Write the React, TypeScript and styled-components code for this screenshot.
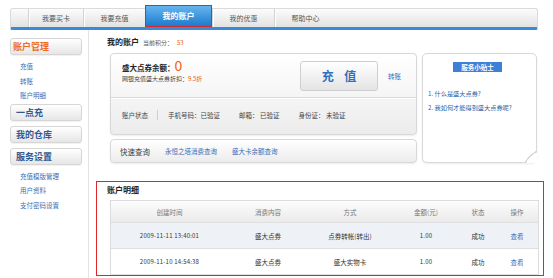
import React from 'react';
import styled, { createGlobalStyle } from 'styled-components';

const Global = createGlobalStyle`
  html, body { margin: 0; padding: 0; background: #fff; }
  body {
    width: 553px; height: 278px; overflow: hidden;
    font-family: "Noto Sans CJK SC", "Liberation Sans", sans-serif;
    color: #333;
  }
  * { box-sizing: border-box; }
`;

const ORANGE = '#f2600c';
const LINK = '#3a6cb4';

const Page = styled.div`
  width: 553px;
`;

const NavBar = styled.nav`
  display: flex;
  margin: 8px 0 0 10px;
  width: 528px;
  height: 22px;
  padding-left: 17px;
  background: linear-gradient(#fcfcfc, #e2e2e2);
  border: 1px solid #dadada;
  border-bottom: 3px solid #3a8ad6;
  border-radius: 3px 3px 2px 2px;
`;

const Tab = styled.div<{ $w: number; $active?: boolean }>`
  width: ${p => p.$w}px;
  flex: none;
  text-align: center;
  font-size: ${p => (p.$active ? 8 : 7)}px;
  font-weight: ${p => (p.$active ? 700 : 400)};
  color: ${p => (p.$active ? '#fff' : '#555')};
  height: ${p => (p.$active ? 22 : 18)}px;
  line-height: ${p => (p.$active ? 20 : 18)}px;
  margin-top: ${p => (p.$active ? -4 : 0)}px;
  border-left: 1px solid ${p => (p.$active ? '#d42a2a' : '#d2d2d2')};
  box-shadow: ${p => (p.$active ? 'none' : 'inset 1px 0 #fff')};
  ${p =>
    p.$active &&
    `
    background: linear-gradient(#66b4ee, #1d7bcd);
    border: 1px solid #d42a2a;
  `}
`;

const Body = styled.div`
  display: flex;
`;

const Sidebar = styled.aside`
  width: 89px;
  flex: none;
  min-height: 248px;
  padding: 8px 6px 0 10px;
  border-right: 1px solid #e3e3e3;
`;

const SideHead = styled.div<{ $accent?: boolean }>`
  height: 17px;
  line-height: 15px;
  padding-left: ${p => (p.$accent ? 2 : 5)}px;
  font-size: 9px;
  font-weight: 700;
  color: ${p => (p.$accent ? '#ee6a1e' : '#2f5b94')};
  border: 1px solid #d6d6d6;
  border-radius: 3px;
  background: linear-gradient(#ffffff, #e6e6e6);
  box-shadow: 0 1px 1px rgba(0, 0, 0, 0.06);
  & + & {
    margin-top: 5px;
  }
`;

const SideList = styled.ul`
  list-style: none;
  margin: 0;
  padding: 4px 0 1px 10px;
`;

const SideItem = styled.li`
  font-size: 6.5px;
  line-height: 14.5px;
  color: ${LINK};
`;

const Main = styled.main`
  flex: 1;
  padding-left: 7px;
`;

const TitleRow = styled.div`
  display: flex;
  align-items: baseline;
  gap: 4px;
  margin-top: 6px;
  height: 12px;
  padding-left: 11px;
`;

const Title = styled.span`
  font-size: 8px;
  font-weight: 700;
  color: #222;
`;

const Small = styled.span<{ $color?: string }>`
  font-size: 6px;
  color: ${p => p.$color || '#555'};
`;

const TopArea = styled.div`
  display: flex;
  gap: 5px;
  margin-top: 5px;
  padding-left: 14px;
`;

const LeftCol = styled.div`
  width: 307px;
  display: flex;
  flex-direction: column;
  gap: 4px;
`;

const Panel = styled.div<{ $h: number }>`
  height: ${p => p.$h}px;
  border: 1px solid #d8d8d8;
  border-radius: 4px;
  background: linear-gradient(#ffffff, #ececec);
  box-shadow: 0 1px 2px rgba(0, 0, 0, 0.08);
`;

const BalanceTop = styled.div`
  display: flex;
  align-items: center;
  height: 44px;
  padding: 0 15px 0 11px;
  border-bottom: 1px solid #d9d9d9;
  box-shadow: 0 1px #fff;
`;

const BalanceText = styled.div`
  flex: 1;
  align-self: flex-start;
  padding-top: 4px;
`;

const BalanceLine = styled.div`
  display: flex;
  align-items: baseline;
  font-size: 7.5px;
  font-weight: 700;
  color: #222;
  height: 14px;
`;

const BigNum = styled.span`
  font-size: 14px;
  line-height: 14px;
  font-weight: 400;
  color: ${ORANGE};
`;

const Discount = styled.div`
  margin-top: 2px;
  font-size: 6px;
  line-height: 10px;
  color: #444;
`;

const ChargeButton = styled.div`
  width: 78px;
  height: 30px;
  margin-right: 10px;
  display: flex;
  align-items: center;
  justify-content: center;
  border: 1px solid #cfcfcf;
  border-radius: 3px;
  background: linear-gradient(#ffffff, #e4e4e4);
  font-size: 12px;
  font-weight: 700;
  letter-spacing: 4px;
  text-indent: 4px;
  color: #2f6fbf;
  white-space: pre;
`;

const Link = styled.span<{ $size?: number }>`
  font-size: ${p => p.$size || 6.5}px;
  color: ${LINK};
`;

const StatusRow = styled.div`
  display: flex;
  align-items: center;
  height: 34px;
  padding-left: 11px;
  font-size: 6.5px;
  color: #444;
`;

const Sep = styled.span<{ $l: number; $r: number }>`
  width: 1px;
  height: 10px;
  background: #cfcfcf;
  margin: 0 ${p => p.$r}px 0 ${p => p.$l}px;
`;

const StatusItem = styled.span`
  margin-right: 19px;
`;

const QuickRow = styled.div`
  display: flex;
  align-items: center;
  height: 100%;
  padding-left: 9px;
  gap: 15px;
`;

const QuickLabel = styled.span`
  font-size: 7.5px;
  color: #444;
`;

const Tips = styled.div`
  position: relative;
  width: 115px;
  height: 110px;
  display: flex;
  flex-direction: column;
  align-items: center;
  padding-top: 8px;
  border: 1px solid #d8d8d8;
  border-radius: 5px;
  background: #fff;
  box-shadow: 0 1px 2px rgba(0, 0, 0, 0.08);
`;

const TipsTitle = styled.div`
  height: 10px;
  line-height: 10px;
  padding: 0 8px;
  margin-left: -4px;
  background: #3d80d8;
  color: #fff;
  font-size: 6.5px;
  font-weight: 700;
`;

const TipsList = styled.ul`
  list-style: none;
  align-self: stretch;
  margin: 15px 0 0;
  padding-left: 5px;
`;

const TipsItem = styled.li`
  font-size: 6.2px;
  line-height: 14px;
  color: #2e5fa6;
`;

const Fold = styled.svg`
  position: absolute;
  right: -1px;
  bottom: -1px;
`;

const DetailBox = styled.section`
  margin-top: 18px;
  width: 448px;
  height: 95px;
  border: 1px solid #e0262b;
  padding: 3px 4px 1px 13px;
  overflow: hidden;
`;

const DetailTitle = styled.div`
  margin-left: -3px;
  height: 10px;
  line-height: 10px;
  font-size: 8px;
  font-weight: 700;
  color: #222;
`;

const Table = styled.div`
  margin-top: 5px;
  width: 429px;
  border: 1px solid #dcdcdc;
  border-bottom: none;
`;

const Row = styled.div<{ $head?: boolean; $bg?: string }>`
  display: grid;
  grid-template-columns: 117px 80px 84px 68px 36px 42px;
  align-items: center;
  height: ${p => (p.$head ? 22 : 26)}px;
  font-size: 6.5px;
  color: ${p => (p.$head ? '#777' : '#333')};
  background: ${p => (p.$head ? 'linear-gradient(#fcfcfc, #ebebeb)' : p.$bg || '#fff')};
  border-top: ${p => (p.$head ? 'none' : '1px solid #e0e0e0')};
  border-bottom: 1px solid #e0e0e0;
  & + & {
    border-top: none;
  }
`;

const Cell = styled.div<{ $mono?: boolean; $link?: boolean }>`
  text-align: center;
  font-size: ${p => (p.$mono ? 6 : 6.5)}px;
  letter-spacing: ${p => (p.$mono ? '0.2px' : 'normal')};
  color: ${p => (p.$link ? LINK : 'inherit')};
`;

const navTabs: { label: string; w: number; active?: boolean }[] = [
  { label: '我要买卡', w: 55 },
  { label: '我要充值', w: 62 },
  { label: '我的账户', w: 67, active: true },
  { label: '我的优惠', w: 62 },
  { label: '帮助中心', w: 62 },
];

const records = [
  { time: '2009-11-11 13:40:01', content: '盛大点券', way: '点券转帐(转出)', amount: '1.00', status: '成功', bg: '#eef2f7' },
  { time: '2009-11-10 14:54:38', content: '盛大点券', way: '盛大实物卡', amount: '1.00', status: '成功', bg: '#fff' },
];

export default function App() {
  return (
    <Page>
      <Global />
      <NavBar>
        {navTabs.map(t => (
          <Tab key={t.label} $w={t.w} $active={t.active}>
            {t.label}
          </Tab>
        ))}
      </NavBar>
      <Body>
        <Sidebar>
          <SideHead $accent>账户管理</SideHead>
          <SideList>
            <SideItem>充值</SideItem>
            <SideItem>转账</SideItem>
            <SideItem>账户明细</SideItem>
          </SideList>
          <SideHead>一点充</SideHead>
          <SideHead>我的仓库</SideHead>
          <SideHead>服务设置</SideHead>
          <SideList>
            <SideItem>充值模版管理</SideItem>
            <SideItem>用户资料</SideItem>
            <SideItem>支付密码设置</SideItem>
          </SideList>
        </Sidebar>
        <Main>
          <TitleRow>
            <Title>我的账户</Title>
            <Small>当前积分：</Small>
            <Small $color={ORANGE}>53</Small>
          </TitleRow>
          <TopArea>
            <LeftCol>
              <Panel $h={82}>
                <BalanceTop>
                  <BalanceText>
                    <BalanceLine>
                      盛大点券余额：<BigNum>0</BigNum>
                    </BalanceLine>
                    <Discount>
                      网银充值盛大点券折扣：<Small $color={ORANGE}>9.5折</Small>
                    </Discount>
                  </BalanceText>
                  <ChargeButton>充 值</ChargeButton>
                  <Link>转账</Link>
                </BalanceTop>
                <StatusRow>
                  <span>账户状态</span>
                  <Sep $l={9} $r={10} />
                  <StatusItem>手机号码：已验证</StatusItem>
                  <StatusItem>邮箱：&nbsp;已验证</StatusItem>
                  <StatusItem>身份证：&nbsp;未验证</StatusItem>
                </StatusRow>
              </Panel>
              <Panel $h={24}>
                <QuickRow>
                  <QuickLabel>快速查询</QuickLabel>
                  <Link>永恒之塔消费查询</Link>
                  <Link>盛大卡余额查询</Link>
                </QuickRow>
              </Panel>
            </LeftCol>
            <Tips>
              <TipsTitle>服务小贴士</TipsTitle>
              <TipsList>
                <TipsItem>1. 什么是盛大点券?</TipsItem>
                <TipsItem>2. 我如何才能得到盛大点券呢?</TipsItem>
              </TipsList>
              <Fold width="14" height="14" viewBox="0 0 14 14">
                <path d="M14 0 L14 14 L0 14 Z" fill="#fff" />
                <path d="M14 1 L1 14 L3 14 Q4 6 14 3 Z" fill="#e8e8e8" stroke="#cfcfcf" strokeWidth="0.8" />
              </Fold>
            </Tips>
          </TopArea>
          <DetailBox>
            <DetailTitle>账户明细</DetailTitle>
            <Table>
              <Row $head>
                <Cell>创建时间</Cell>
                <Cell>消费内容</Cell>
                <Cell>方式</Cell>
                <Cell>金额(元)</Cell>
                <Cell>状态</Cell>
                <Cell>操作</Cell>
              </Row>
              {records.map(r => (
                <Row key={r.time} $bg={r.bg}>
                  <Cell $mono>{r.time}</Cell>
                  <Cell>{r.content}</Cell>
                  <Cell>{r.way}</Cell>
                  <Cell $mono>{r.amount}</Cell>
                  <Cell>{r.status}</Cell>
                  <Cell $link>查看</Cell>
                </Row>
              ))}
            </Table>
          </DetailBox>
        </Main>
      </Body>
    </Page>
  );
}
